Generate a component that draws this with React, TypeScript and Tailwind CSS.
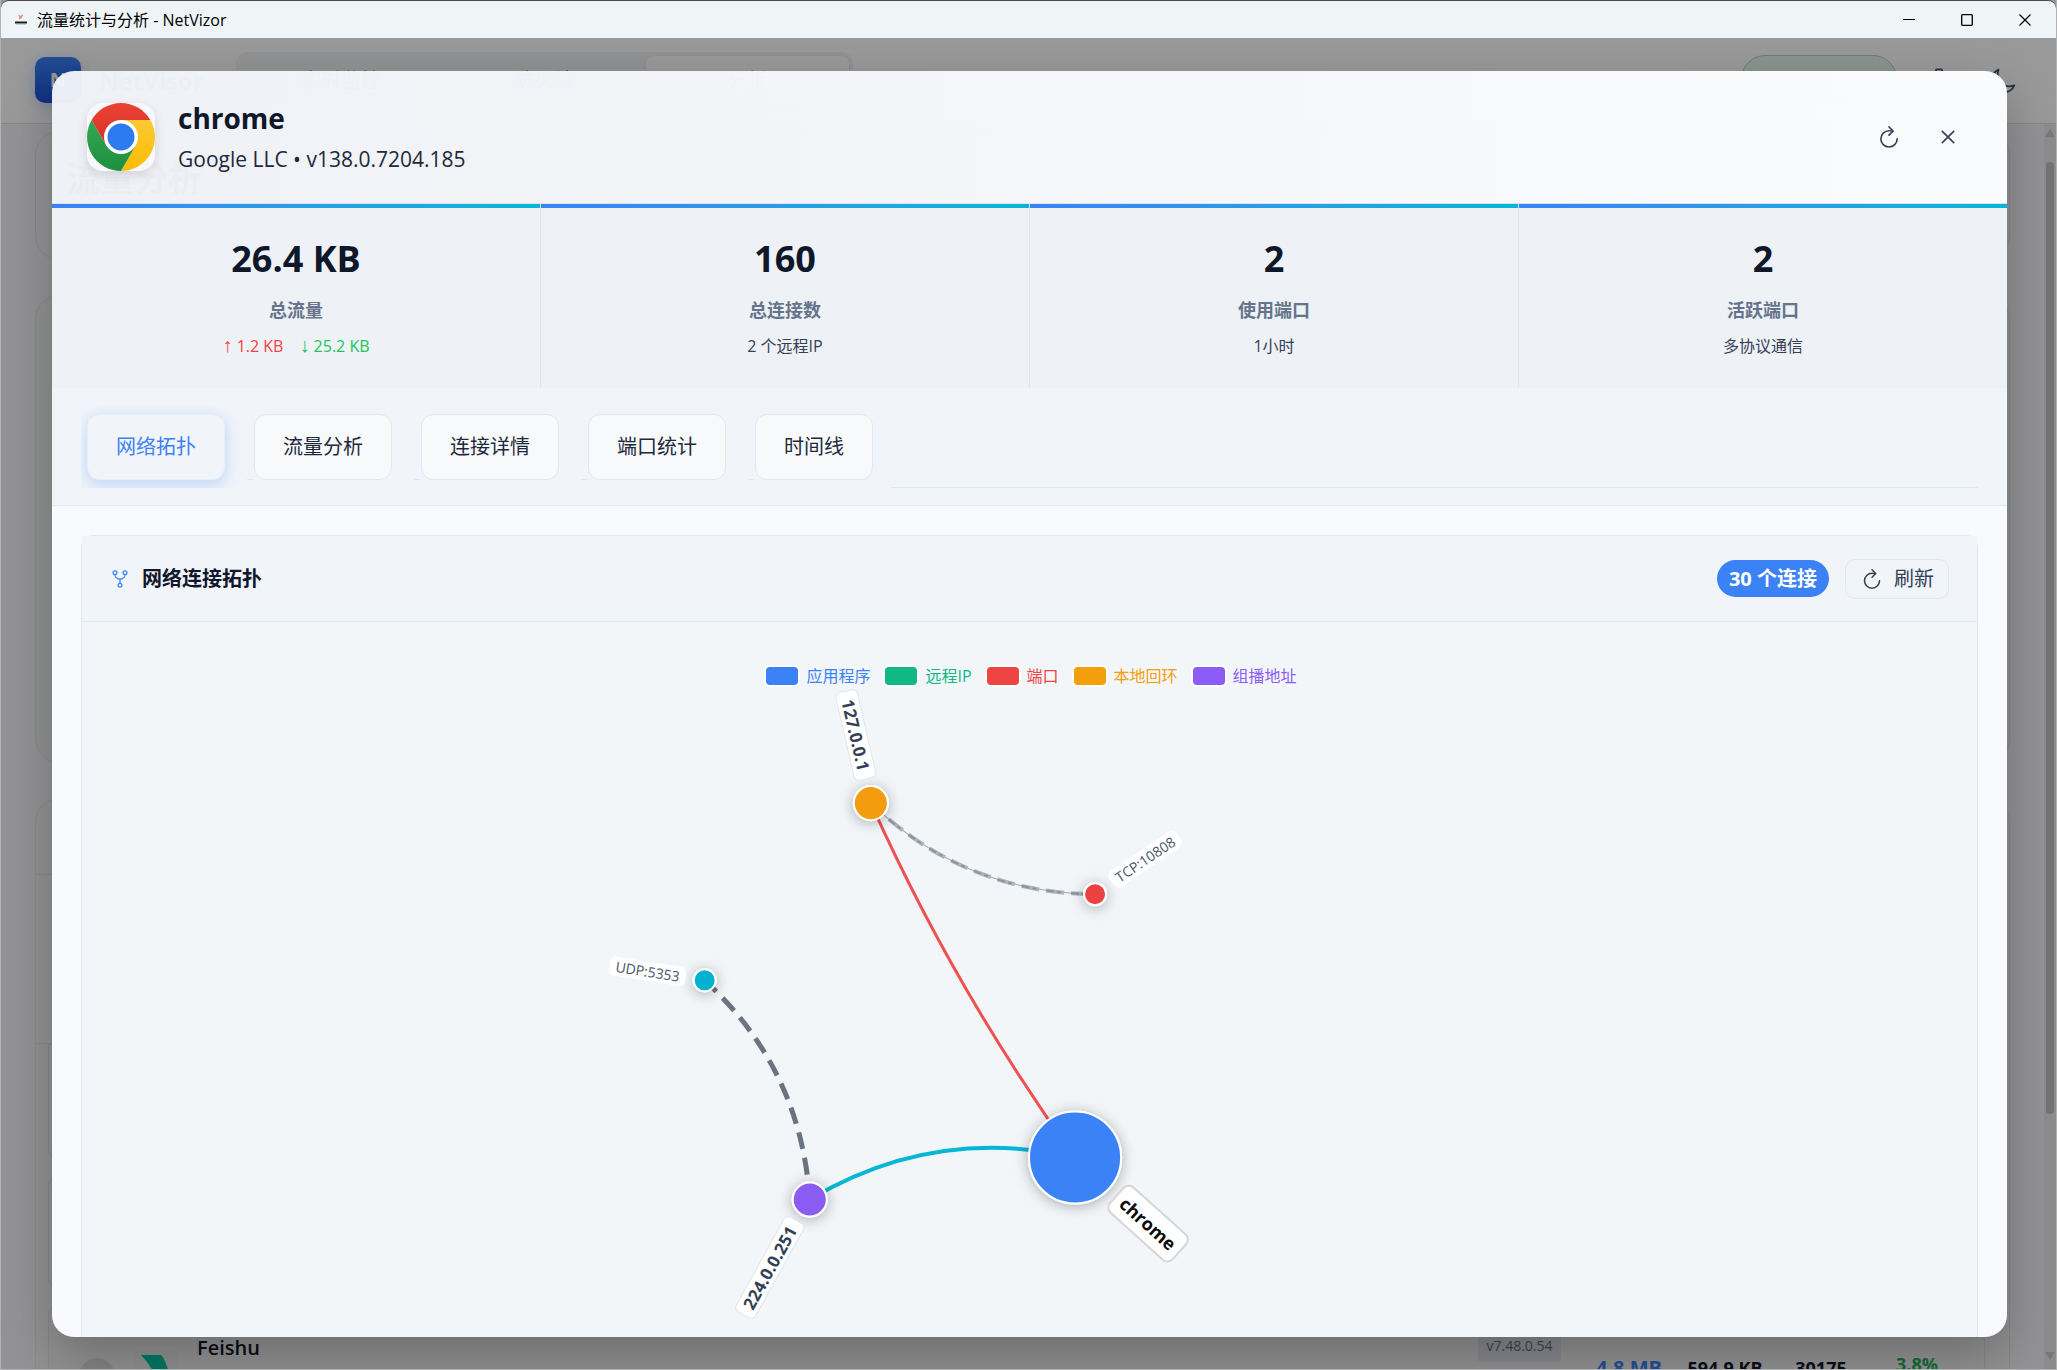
import {
  IoCloseOutline,
  IoGitNetworkOutline,
  IoMoonOutline,
  IoRefreshOutline,
  IoSettingsOutline,
} from "react-icons/io5";

const stats = [
  { value: "26.4 KB", label: "总流量", detail: "" },
  { value: "160", label: "总连接数", detail: "2 个远程IP" },
  { value: "2", label: "使用端口", detail: "1小时" },
  { value: "2", label: "活跃端口", detail: "多协议通信" },
];

const tabs = ["网络拓扑", "流量分析", "连接详情", "端口统计", "时间线"];

const legend = [
  { name: "应用程序", swatch: "bg-[#3b82f6]", text: "text-[#3b82f6]" },
  { name: "远程IP", swatch: "bg-[#10b981]", text: "text-[#10b981]" },
  { name: "端口", swatch: "bg-[#ef4444]", text: "text-[#ef4444]" },
  { name: "本地回环", swatch: "bg-[#f59e0b]", text: "text-[#f59e0b]" },
  { name: "组播地址", swatch: "bg-[#8b5cf6]", text: "text-[#8b5cf6]" },
];

function ChromeLogo() {
  return (
    <svg viewBox="0 0 68 68" className="size-[68px]" role="img" aria-label="Chrome">
      <defs>
        <linearGradient id="cr" x1="0" y1="0" x2="0" y2="1">
          <stop offset="0" stopColor="#ea4335" />
          <stop offset="1" stopColor="#d93025" />
        </linearGradient>
        <linearGradient id="cg" x1="0" y1="0" x2="0" y2="1">
          <stop offset="0" stopColor="#34a853" />
          <stop offset="1" stopColor="#1e8e3e" />
        </linearGradient>
        <linearGradient id="cy" x1="0" y1="0" x2="0" y2="1">
          <stop offset="0" stopColor="#fcc934" />
          <stop offset="1" stopColor="#fbbc04" />
        </linearGradient>
      </defs>
      <path d="M34 17 H63.4 A34 34 0 0 1 34 68 L48.7 42.5 Z" fill="url(#cy)" />
      <path d="M48.7 42.5 L34 68 A34 34 0 0 1 4.6 17 L19.3 42.5 Z" fill="url(#cg)" />
      <path d="M34 17 H63.4 A34 34 0 0 0 4.6 17 L19.3 42.5 Z" fill="url(#cr)" />
      <circle cx="34" cy="34" r="17" fill="#fff" />
      <circle cx="34" cy="34" r="13.5" fill="#2c7bf0" />
    </svg>
  );
}

type LabelProps = {
  x: number;
  y: number;
  angle: number;
  width: number;
  height: number;
  text: string;
  size: number;
  weight: number;
  color: string;
  border: string;
};

function NodeLabel({ x, y, angle, width, height, text, size, weight, color, border }: LabelProps) {
  return (
    <g transform={`translate(${x} ${y}) rotate(${angle})`}>
      <rect
        x={-width / 2}
        y={-height / 2}
        width={width}
        height={height}
        rx={height > 25 ? 7 : 5}
        fill="#fff"
        fillOpacity={0.95}
        stroke={border}
        strokeWidth={height > 25 ? 2 : 1}
      />
      <text
        textAnchor="middle"
        dominantBaseline="central"
        fontSize={size}
        fontWeight={weight}
        fill={color}
      >
        {text}
      </text>
    </g>
  );
}

function Topology() {
  return (
    <svg
      viewBox="83 692 1893 680"
      preserveAspectRatio="xMidYMin meet"
      className="block w-full overflow-visible"
      role="img"
      aria-label="网络连接拓扑"
    >
      <defs>
        <filter id="glow" x="-60%" y="-60%" width="220%" height="220%">
          <feDropShadow dx="0" dy="2" stdDeviation="7" floodColor="#000" floodOpacity="0.3" />
        </filter>
      </defs>
      <g fill="none">
        <path d="M871 804 Q955 991 1075 1158" stroke="#ef5050" strokeWidth="3" />
        <path d="M810 1200 Q934 1126 1075 1158" stroke="#06b6d4" strokeWidth="4" />
        <path
          d="M810 1200 Q801 1069 705 981"
          stroke="#6b7280"
          strokeWidth="5"
          strokeDasharray="17 9"
          strokeDashoffset="1"
        />
        <path d="M871 804 Q965 894 1095 895" stroke="#a3a8af" strokeWidth="1" />
        <path
          d="M871 804 Q965 894 1095 895"
          stroke="#b0b4ba"
          strokeWidth="4"
          strokeDasharray="18 7"
          strokeDashoffset="1"
        />
        <path
          d="M871 804 Q965 894 1095 895"
          stroke="#8d939c"
          strokeWidth="2"
          strokeDasharray="8 3 4 10"
          strokeDashoffset="1"
        />
      </g>
      <g stroke="#fff" strokeWidth="2" filter="url(#glow)">
        <circle cx="871" cy="804" r="17" fill="#f39c0c" />
        <circle cx="1095" cy="895" r="11" fill="#ea4242" />
        <circle cx="705" cy="981" r="11" fill="#06b2cf" />
        <circle cx="810" cy="1200" r="17" fill="#8a5bf2" />
        <circle cx="1075" cy="1158" r="46" fill="#3b82f6" />
      </g>
      <NodeLabel x={856} y={736} angle={77} width={90} height={22} text="127.0.0.1" size={17} weight={700} color="#334155" border="#e2e5ea" />
      <NodeLabel x={1145} y={860} angle={-34} width={80} height={18} text="TCP:10808" size={14} weight={400} color="#475569" border="#fff" />
      <NodeLabel x={648} y={972} angle={9} width={76} height={18} text="UDP:5353" size={14} weight={400} color="#475569" border="#fff" />
      <NodeLabel x={770} y={1268} angle={-61} width={108} height={22} text="224.0.0.251" size={17} weight={700} color="#334155" border="#e2e5ea" />
      <NodeLabel x={1148} y={1224} angle={42} width={84} height={34} text="chrome" size={18} weight={700} color="#0a0a0a" border="#d6d6d6" />
    </svg>
  );
}

function TitleBar() {
  return (
    <header className="flex h-[38px] shrink-0 items-center rounded-t-lg border-t border-[#4a4a4c] bg-[#eff5f7] pr-0.5 pl-3 text-black">
      <svg viewBox="0 0 16 16" className="size-4" aria-hidden="true">
        <path d="M2 9.5h12v2H2z" fill="#1c1c1c" />
        <path d="M3 12h10v1H3z" fill="#b9d5d5" />
        <path d="M6 3l1 2 3-2M6 7l3-2" stroke="#e58a72" strokeWidth="1.2" fill="none" />
      </svg>
      <span className="ml-2 text-base">流量统计与分析 - NetVizor</span>
      <div className="ml-auto flex">
        <button type="button" aria-label="最小化" className="flex w-[58px] justify-center">
          <svg viewBox="0 0 12 12" className="size-3" fill="none" stroke="currentColor">
            <path d="M0 5.5h12" />
          </svg>
        </button>
        <button type="button" aria-label="最大化" className="flex w-[58px] justify-center">
          <svg viewBox="0 0 12 12" className="size-3" fill="none" stroke="currentColor" strokeWidth="1.3">
            <rect x="0.7" y="0.7" width="10.6" height="10.6" rx="1" />
          </svg>
        </button>
        <button type="button" aria-label="关闭窗口" className="flex w-[58px] justify-center">
          <svg viewBox="0 0 12 12" className="size-3" fill="none" stroke="currentColor" strokeWidth="1.2">
            <path d="M0.5 0.5l11 11M11.5 0.5l-11 11" />
          </svg>
        </button>
      </div>
    </header>
  );
}

function BackgroundPage() {
  return (
    <div className="flex h-full flex-col bg-[#f5f6f8]" aria-hidden="true">
      <div className="flex h-[86px] shrink-0 items-center border-b border-[#dcdfe6] bg-white pr-[39px] pl-[34px]">
        <span className="mb-0.5 flex size-[46px] items-center justify-center rounded-[10px] bg-linear-to-b from-[#3b82f6] to-[#1d4ed8] text-xl font-bold text-white shadow-[0_4px_16px_rgba(59,130,246,0.3)]">
          N
        </span>
        <span className="ml-[18px] text-2xl font-bold text-[#10a5b9]">NetVisor</span>
        <div className="ml-8 flex h-[58px] w-[617px] rounded-xl bg-[#f1f3f7] p-1 text-xl text-[#64748b]">
          <span className="flex flex-1 items-center justify-center">实时监控</span>
          <span className="flex flex-1 items-center justify-center">防火墙</span>
          <span className="flex flex-1 items-center justify-center rounded-lg bg-white shadow">分析</span>
        </div>
        <span className="mb-1 ml-auto h-12 w-[156px] rounded-full border border-[#a7d8bb] bg-[#e7f6ec]" />
        <IoSettingsOutline className="ml-7 size-7 text-[#475569]" />
        <IoMoonOutline className="ml-9 size-7 text-[#475569]" />
      </div>
      <div className="flex min-h-0 flex-1">
        <div className="flex min-w-0 flex-1 flex-col gap-[35px] overflow-hidden pt-[7px] pr-[34px] pl-[34px]">
          <div className="h-[129px] shrink-0 rounded-3xl border border-[#e2e5ea] px-[30px] pt-[22px] text-[34px] leading-[48px] font-bold text-[#334155]">
            流量分析
          </div>
          <div className="h-[468px] shrink-0 rounded-3xl border border-[#e2e5ea] bg-[#f1f3f3]" />
          <div className="shrink-0 rounded-3xl border border-[#e2e5ea] bg-[#f3f4f5]">
            <div className="h-[76px] border-b border-[#e2e5ea]" />
            <div className="h-[169px] border-b border-[#e2e5ea]" />
            <div className="mr-6 flex flex-col gap-[14px] pl-3">
              <div className="h-[116px] rounded-b-xl border border-[#dfe2e8]" />
              <div className="h-[116px] rounded-xl border border-[#dfe2e8]" />
              <div className="flex h-[116px] rounded-xl border border-[#dfe2e8] pt-[29px] pl-[30px]">
                <span className="mt-6 size-9 rounded-full bg-[#dcdcdc]" />
                <svg viewBox="0 0 46 46" className="mt-4 ml-[18px] size-[46px] rounded-lg bg-[#f0f0f0]">
                  <path d="M8 5h20q6 7 8 20l-12 8q-4-16-16-28z" fill="#00c9a8" />
                  <path d="M22 32q8-15 24-11l-6 12z" fill="#133c9a" />
                  <path d="M0 20q8 12 24 14l-6 10q-14-2-18-6z" fill="#3370ff" />
                </svg>
                <span className="ml-[18px] text-xl font-semibold text-[#0f172a]">Feishu</span>
                <div className="ml-auto flex text-[#0f172a]">
                  <span className="h-7 w-[83px] rounded bg-[#e2e5ec] text-center text-sm leading-6 text-[#64748b]">
                    v7.48.0.54
                  </span>
                  <div className="mt-5 flex pr-[19px] text-lg leading-7 font-bold">
                    <span className="ml-5 w-24 text-center text-xl leading-7 text-[#3b82f6]">4.8 MB</span>
                    <span className="w-24 text-center">594.9 KB</span>
                    <span className="w-24 text-center">30175</span>
                    <span className="-mt-1 w-24 text-center text-[#22b35a]">3.8%</span>
                  </div>
                </div>
              </div>
            </div>
          </div>
        </div>
        <div className="flex w-3 shrink-0 flex-col items-center bg-[#e9eaec] pt-1 pb-2">
          <svg viewBox="0 0 10 8" className="size-2.5 shrink-0">
            <path d="M5 0l5 8H0z" fill="#c8c8c8" />
          </svg>
          <span className="mt-6 h-[952px] w-2 shrink-0 rounded-full bg-[#c0c0c0]" />
          <svg viewBox="0 0 10 8" className="mt-auto size-2.5 shrink-0">
            <path d="M5 8l5-8H0z" fill="#c8c8c8" />
          </svg>
        </div>
      </div>
    </div>
  );
}

function DetailDialog() {
  return (
    <section
      role="dialog"
      aria-label="chrome"
      className="flex h-full w-full flex-col overflow-hidden rounded-[22px] shadow-[0_20px_50px_rgba(0,0,0,0.25)]"
    >
      <header className="flex h-[133px] shrink-0 items-center border-b border-[#dfe4ec] bg-linear-to-r from-[#f3f5fa]/96 via-[#f6f8fb]/98 to-[#fbfcfe]/99 pr-[39px] pl-[35px]">
        <span className="rounded-2xl bg-white/50 shadow-[0_4px_12px_rgba(0,0,0,0.12)]">
          <ChromeLogo />
        </span>
        <div className="ml-[23px]">
          <h1 className="text-[28px] leading-[38px] font-bold text-[#0f172a]">chrome</h1>
          <p className="mt-1.5 text-[21px] leading-8 text-[#1e293b]">Google LLC • v138.0.7204.185</p>
        </div>
        <div className="ml-auto flex gap-[19px] text-[#334155]">
          <button type="button" aria-label="刷新" className="flex size-10 items-center justify-center">
            <IoRefreshOutline className="size-[26px]" />
          </button>
          <button type="button" aria-label="关闭" className="flex size-10 items-center justify-center">
            <IoCloseOutline className="size-[26px]" />
          </button>
        </div>
      </header>

      <div className="grid shrink-0 grid-cols-4 gap-px bg-[#e2e6ec]">
        {stats.map((s) => (
          <div key={s.label} className="bg-[#eef1f6] text-center">
            <div className="h-1 bg-linear-to-r from-[#3b82f6] to-[#06b6d4]" />
            <div className="pt-[29px] pb-7">
              <div className="text-4xl leading-[44px] font-bold text-[#0f172a]">{s.value}</div>
              <div className="mt-[15px] text-lg leading-7 font-bold text-[#64748b]">{s.label}</div>
              <div className="mt-2 flex h-7 items-center justify-center gap-4 text-base text-[#334155]">
                {s.detail || (
                  <>
                    <span className="text-[#ef4444]">
                      <span className="font-['Liberation_Sans'] text-xl leading-5">↑</span> 1.2 KB
                    </span>
                    <span className="text-[#22c55e]">
                      <span className="font-['Liberation_Sans'] text-xl leading-5">↓</span> 25.2 KB
                    </span>
                  </>
                )}
              </div>
            </div>
          </div>
        ))}
      </div>

      <div className="shrink-0 border-b border-[#e2e8f0] bg-[#f1f5fa] px-[29px] py-[17px]">
        <div className="flex overflow-hidden" role="tablist">
          <div className="flex gap-[29px] pt-[9px] pr-[18px] pb-2 pl-1.5">
            {tabs.map((t, i) => (
              <button
                key={t}
                type="button"
                role="tab"
                aria-selected={i === 0}
                className={
                  i === 0
                    ? "h-[66px] rounded-xl border border-[#e8edf6] bg-[#f1f5fa] px-7 text-xl text-[#3b82f6] shadow-[0_4px_16px_rgba(59,130,246,0.3)]"
                    : "relative h-[66px] rounded-xl border border-[#e2e8f0] bg-[#f8f9fb] px-7 text-xl text-[#1e293b] before:absolute before:-bottom-px before:-left-2 before:h-px before:w-1.5 before:bg-[#e2e8f0]"
                }
              >
                {t}
              </button>
            ))}
          </div>
          <div className="flex-1 border-b border-[#e2e8f0]" />
        </div>
      </div>

      <div className="min-h-0 flex-1 overflow-hidden bg-[#f9fafd] px-[29px] pt-[29px]">
        <div className="rounded-xl border border-[#e2e8f0] bg-[#f2f6f9]">
          <div className="flex h-[86px] items-center border-b border-[#e2e8f0] bg-[#f1f4f9] px-7">
            <IoGitNetworkOutline className="size-5 text-[#3b82f6]" />
            <h2 className="ml-3 text-xl font-bold text-[#0f172a]">网络连接拓扑</h2>
            <span className="ml-auto flex h-[37px] items-center rounded-full bg-[#3b82f6] px-3 text-xl font-bold text-white">
              30 个连接
            </span>
            <button
              type="button"
              className="ml-4 flex h-10 items-center gap-2.5 rounded-[10px] border border-[#e2e8f0] px-[14px] text-xl text-[#334155]"
            >
              <IoRefreshOutline className="size-6" />
              刷新
            </button>
          </div>
          <div className="flex h-[69px] items-end justify-center gap-[15px] pb-[3px] pl-1 text-base">
            {legend.map((l) => (
              <button key={l.name} type="button" className={`flex items-center gap-2 ${l.text}`}>
                <span className={`-mx-0.5 h-[22px] w-9 rounded-md border-2 border-white ${l.swatch}`} />
                {l.name}
              </button>
            ))}
          </div>
          <Topology />
        </div>
      </div>
    </section>
  );
}

export default function App() {
  return (
    <div className="flex h-screen flex-col overflow-hidden border-x border-b border-[#b0b2b4] bg-[#999999] font-['Open_Sans','Noto_Sans_CJK_SC',sans-serif]">
      <TitleBar />
      <div className="relative min-h-0 flex-1">
        <BackgroundPage />
        <div className="absolute inset-0 bg-black/40 pt-[33px] pr-[49px] pb-8 pl-[51px]">
          <DetailDialog />
        </div>
      </div>
    </div>
  );
}
